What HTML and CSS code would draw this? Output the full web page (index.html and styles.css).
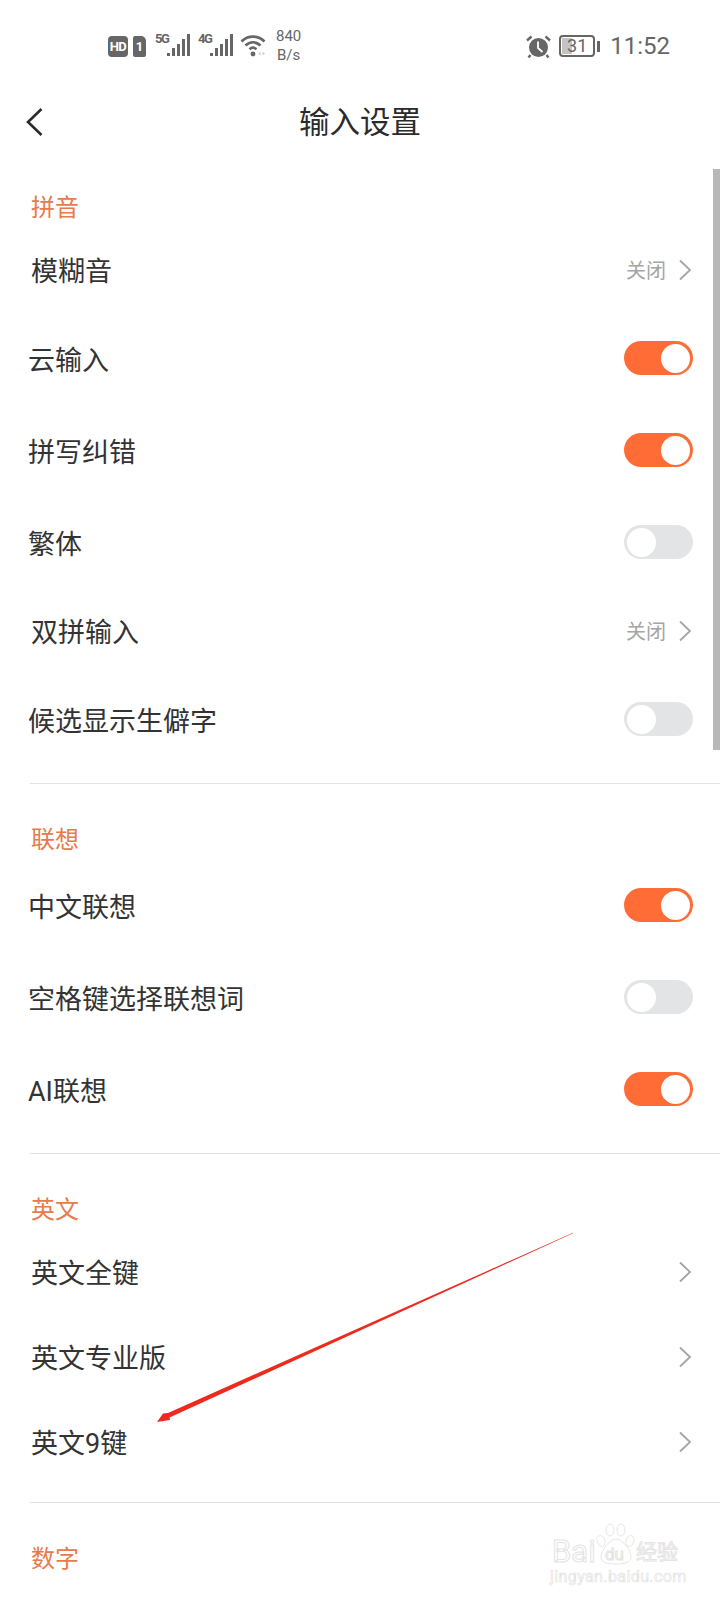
FILE: index.html
```html
<!DOCTYPE html>
<html lang="zh-CN">
<head>
    <meta charset="UTF-8">
    <meta name="viewport" content="width=device-width, initial-scale=1.0">
    <title>输入设置</title>
    <link rel="stylesheet" href="styles.css">
</head>
<body>
    <div class="status-bar">
        <div class="status-left">
            <span class="badge badge-hd">HD</span>
            <span class="badge badge-sim">1</span>
            <span class="net-label">5G</span>
            <svg class="bars" width="23" height="22" viewBox="0 0 23 22"><path d="M0 19h3v3H0zM5 14h3v8H5zM10 10h3v12h-3zM15 5h3v17h-3zM20 0h3v22h-3z" fill="#666"/></svg>
            <span class="net-label net-label-4g">4G</span>
            <svg class="bars" width="23" height="22" viewBox="0 0 23 22"><path d="M0 19h3v3H0zM5 14h3v8H5zM10 10h3v12h-3zM15 5h3v17h-3zM20 0h3v22h-3z" fill="#666"/></svg>
            <svg class="wifi" width="27" height="23" viewBox="0 0 27 23">
                <path d="M1.500 7.500C8 1 18 1 24.500 7.500" fill="none" stroke="#666" stroke-width="2.600"/>
                <path d="M5.500 11.500C10 7.200 16 7.200 20.500 11.500" fill="none" stroke="#666" stroke-width="2.600"/>
                <path d="M9.500 15.300C11.800 13.200 14.200 13.200 16.500 15.300" fill="none" stroke="#666" stroke-width="2.600"/>
                <circle cx="13" cy="20" r="2.400" fill="#666"/>
                <path d="M18 19.500l2.500-2v4zM25 19.500l-2.500-2v4z" fill="#ccc"/>
            </svg>
            <div class="speed">840<br>B/s</div>
        </div>
        <div class="status-right">
            <svg class="alarm" width="25" height="23" viewBox="0 0 25 23">
                <circle cx="12.500" cy="12.500" r="9.500" fill="#666"/>
                <path d="M12 6.500v6.500l4.500 4" fill="none" stroke="#fff" stroke-width="1.800"/>
                <path d="M1 5.500L5.500 1.500M24 5.500L19.500 1.500M4.500 20l-2 2.500M20.500 20l2 2.500" stroke="#666" stroke-width="2.400" fill="none"/>
            </svg>
            <div class="battery"><span class="battery-fill"></span><span class="battery-num">31</span></div>
            <span class="battery-tip"></span>
            <span class="clock">11:52</span>
        </div>
    </div>

    <div class="title-bar">
        <svg class="back" width="20" height="30" viewBox="0 0 20 30"><path d="M16.500 2L3 15l13.500 13" fill="none" stroke="#2b2b2b" stroke-width="2.600"/></svg>
        <span class="title">输入设置</span>
    </div>

    <div class="scrollbar"></div>

    <div class="section">
        <div class="section-name">拼音</div>
        <div class="row row-link"><span>模糊音</span><span class="row-value">关闭<svg class="chevron" width="14" height="22" viewBox="0 0 14 22"><path d="M2 1.500l10 9.500-10 9.500" fill="none" stroke="#a5a5a5" stroke-width="1.800"/></svg></span></div>
        <div class="row row-switch"><span>云输入</span><span class="toggle on"></span></div>
        <div class="row row-switch"><span>拼写纠错</span><span class="toggle on"></span></div>
        <div class="row row-switch"><span>繁体</span><span class="toggle"></span></div>
        <div class="row row-link"><span>双拼输入</span><span class="row-value">关闭<svg class="chevron" width="14" height="22" viewBox="0 0 14 22"><path d="M2 1.500l10 9.500-10 9.500" fill="none" stroke="#a5a5a5" stroke-width="1.800"/></svg></span></div>
        <div class="row row-switch"><span>候选显示生僻字</span><span class="toggle"></span></div>
    </div>

    <div class="section">
        <div class="section-name">联想</div>
        <div class="row row-switch"><span>中文联想</span><span class="toggle on"></span></div>
        <div class="row row-switch"><span>空格键选择联想词</span><span class="toggle"></span></div>
        <div class="row row-switch"><span>AI联想</span><span class="toggle on"></span></div>
    </div>

    <div class="section">
        <div class="section-name">英文</div>
        <div class="row row-link"><span>英文全键</span><span class="row-value"><svg class="chevron" width="14" height="22" viewBox="0 0 14 22"><path d="M2 1.500l10 9.500-10 9.500" fill="none" stroke="#a5a5a5" stroke-width="1.800"/></svg></span></div>
        <div class="row row-link"><span>英文专业版</span><span class="row-value"><svg class="chevron" width="14" height="22" viewBox="0 0 14 22"><path d="M2 1.500l10 9.500-10 9.500" fill="none" stroke="#a5a5a5" stroke-width="1.800"/></svg></span></div>
        <div class="row row-link"><span>英文9键</span><span class="row-value"><svg class="chevron" width="14" height="22" viewBox="0 0 14 22"><path d="M2 1.500l10 9.500-10 9.500" fill="none" stroke="#a5a5a5" stroke-width="1.800"/></svg></span></div>
    </div>

    <div class="section section-last">
        <div class="section-name">数字</div>
    </div>

    <!-- 红色箭头标注 -->
    <svg class="annotation" width="720" height="1600" viewBox="0 0 720 1600">
        <path d="M573 1232.800L168 1413 163 1413.500 157 1422 170 1420 169.500 1417.500 573 1233.300z" fill="#ee2a1e"/>
    </svg>

    <!-- 水印 -->
    <div class="watermark">
        <svg class="paw" width="40" height="44" viewBox="0 0 40 44">
            <ellipse cx="5" cy="19" rx="3.800" ry="5.500" transform="rotate(-20 5 19)"/>
            <ellipse cx="14" cy="8" rx="4" ry="6"/>
            <ellipse cx="25" cy="8" rx="4" ry="6"/>
            <ellipse cx="34" cy="19" rx="3.800" ry="5.500" transform="rotate(20 34 19)"/>
            <path d="M20 17c6 0 15 11 15 18 0 5-5 7-15 7S5 40 5 35c0-7 9-18 15-18z"/>
        </svg>
        <div class="wm-main"><span class="wm-bai">Bai</span><span class="wm-du">du</span><span class="wm-cn">经验</span></div>
        <div class="wm-url">jingyan.baidu.com</div>
    </div>
</body>
</html>
```

FILE: styles.css
```css
html, body {
    margin: 0;
    padding: 0;
}

body {
    position: relative;
    width: 720px;
    height: 1600px;
    overflow: hidden;
    background-color: #fff;
    color: #333;
    font-family: Roboto, "Noto Sans CJK SC", sans-serif;
}

/* 状态栏 */
.status-bar {
    display: flex;
    justify-content: space-between;
    align-items: center;
    height: 92px;
    padding: 0 50px 0 108px;
    box-sizing: border-box;
    color: #666;
}

.status-left,
.status-right {
    display: flex;
    align-items: center;
}

.badge {
    display: flex;
    align-items: center;
    justify-content: center;
    height: 21px;
    background-color: #666;
    color: #fff;
    font-size: 13px;
    font-weight: 700;
}

.badge-hd {
    width: 20px;
    border-radius: 4px;
    letter-spacing: -0.5px;
}

.badge-sim {
    width: 13px;
    margin-left: 5px;
    border-radius: 2px 5px 2px 2px;
}

.net-label {
    align-self: flex-start;
    width: 11px;
    margin: 6px 0 0 9px;
    font-size: 13px;
    font-weight: 700;
    line-height: 12px;
    letter-spacing: -1.5px;
    white-space: nowrap;
}

.net-label-4g {
    margin-left: 8px;
}

.bars {
    margin: -2px 0 0 1px;
}

.wifi {
    margin: -2px 0 0 7px;
}

.speed {
    margin-left: 9px;
    font-size: 15px;
    line-height: 19px;
    text-align: center;
}

.alarm {
    margin-right: 8px;
}

.battery {
    position: relative;
    width: 36px;
    height: 22px;
    border: 2px solid #666;
    border-radius: 4px;
    box-sizing: border-box;
    text-align: center;
    font-size: 18px;
    line-height: 18px;
}

.battery-fill {
    position: absolute;
    left: 1px;
    top: 1px;
    bottom: 1px;
    width: 10px;
    background-color: #c4c4c4;
}

.battery-num {
    position: relative;
}

.battery-tip {
    width: 3px;
    height: 11px;
    margin-left: 2px;
    background-color: #666;
}

.clock {
    margin-left: 10px;
    font-size: 24px;
}

/* 标题栏 */
.title-bar {
    position: relative;
    display: flex;
    align-items: center;
    justify-content: center;
    height: 60px;
    padding-bottom: 4px;
    box-sizing: border-box;
}

.back {
    position: absolute;
    left: 25px;
    top: 15px;
}

.title {
    font-size: 30.5px;
    color: #2b2b2b;
}

.scrollbar {
    position: absolute;
    right: 0;
    top: 169px;
    width: 7px;
    height: 581px;
    background-color: #b8b8b8;
}

/* 设置分组 */
.section {
    margin-left: 30px;
    padding-bottom: 18px;
    border-bottom: 1px solid #e3e3e3;
}

.section-last {
    border-bottom: none;
}

.section-name {
    height: 75px;
    padding: 40px 0 0 1px;
    box-sizing: border-box;
    font-size: 24px;
    line-height: 32px;
    color: #e87a4c;
}

.row {
    display: flex;
    justify-content: space-between;
    align-items: center;
    padding-right: 27px;
    font-size: 27px;
}

.row-link {
    height: 85px;
    padding-left: 1px;
}

.row-switch {
    height: 92px;
    margin-left: -2px;
}

.row-value {
    display: flex;
    align-items: center;
    font-size: 20px;
    color: #a5a5a5;
}

.chevron {
    margin: 0 1px 0 12px;
}

.toggle {
    position: relative;
    width: 69px;
    height: 34px;
    border-radius: 17px;
    background-color: #e3e4e5;
}

.toggle::after {
    content: "";
    position: absolute;
    left: 3px;
    top: 3px;
    width: 29px;
    height: 29px;
    border-radius: 50%;
    background-color: #fff;
}

.toggle.on {
    background-color: #ff6c36;
}

.toggle.on::after {
    left: 37px;
}

/* 标注和水印盖在内容上面 */
.annotation {
    position: absolute;
    left: 0;
    top: 0;
    pointer-events: none;
}

.watermark {
    position: absolute;
    left: 548px;
    top: 1520px;
    width: 140px;
    height: 72px;
    color: #fff;
}

.paw {
    position: absolute;
    left: 48px;
    top: 2px;
    fill: #fff;
    stroke: #e6e6e6;
    stroke-width: 1;
}

.wm-main {
    position: absolute;
    left: 4px;
    top: 18px;
    white-space: nowrap;
    line-height: 28px;
    -webkit-text-stroke: 1px #e4e4e4;
}

.wm-bai {
    font-size: 31px;
}

.wm-du {
    position: absolute;
    left: 53px;
    top: 6px;
    font-size: 17px;
    line-height: 20px;
}

.wm-cn {
    position: absolute;
    left: 84px;
    top: 0;
    font-size: 21px;
}

.wm-url {
    position: absolute;
    left: 2px;
    top: 47px;
    font-size: 16px;
    line-height: 20px;
    white-space: nowrap;
    letter-spacing: 0.4px;
    -webkit-text-stroke: 0.7px #e4e4e4;
}
```
